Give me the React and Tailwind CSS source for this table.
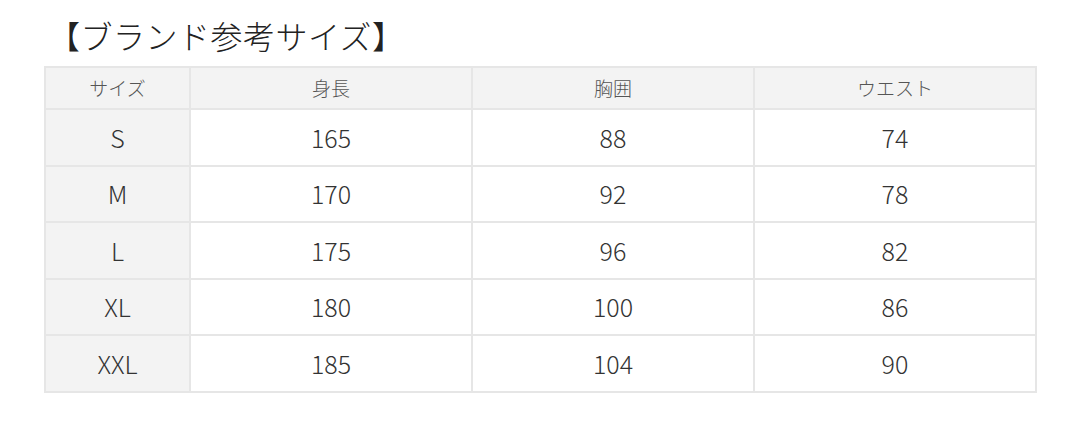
const rows = [
  ['S', '165', '88', '74'],
  ['M', '170', '92', '78'],
  ['L', '175', '96', '82'],
  ['XL', '180', '100', '86'],
  ['XXL', '185', '104', '90'],
];

const headers = ['サイズ', '身長', '胸囲', 'ウエスト'];

export default function App() {
  return (
    <div
      className="w-[1080px] h-[426px] bg-white pl-[44px] pt-[15px]"
      style={{ fontFamily: '"Noto Sans CJK JP", "Noto Sans", sans-serif' }}
    >
      <h1 className="ml-[4px] text-[32px] leading-[40px] font-light text-[#222] tracking-[0.5px]">【ブランド参考サイズ】</h1>
      <table className="mt-[11px] w-[991px] border-collapse border-2 border-[#e6e6e6] table-fixed">
        <colgroup>
          <col className="w-[145px]" />
          <col className="w-[282px]" />
          <col className="w-[282px]" />
          <col className="w-[282px]" />
        </colgroup>
        <thead>
          <tr className="h-[42px] bg-[#f3f3f3]">
            {headers.map((h) => (
              <th key={h} className="border-2 border-[#e6e6e6] text-[19px] font-light text-[#555] text-center p-0">
                {h}
              </th>
            ))}
          </tr>
        </thead>
        <tbody>
          {rows.map((r) => (
            <tr key={r[0]} className="h-[56.5px]">
              {r.map((c, i) => (
                <td
                  key={i}
                  className={`border-2 border-[#e6e6e6] text-[25px] font-light text-[#333] text-center p-0 ${i === 0 ? 'bg-[#f3f3f3]' : 'bg-white'}`}
                >
                  {c}
                </td>
              ))}
            </tr>
          ))}
        </tbody>
      </table>
    </div>
  );
}
